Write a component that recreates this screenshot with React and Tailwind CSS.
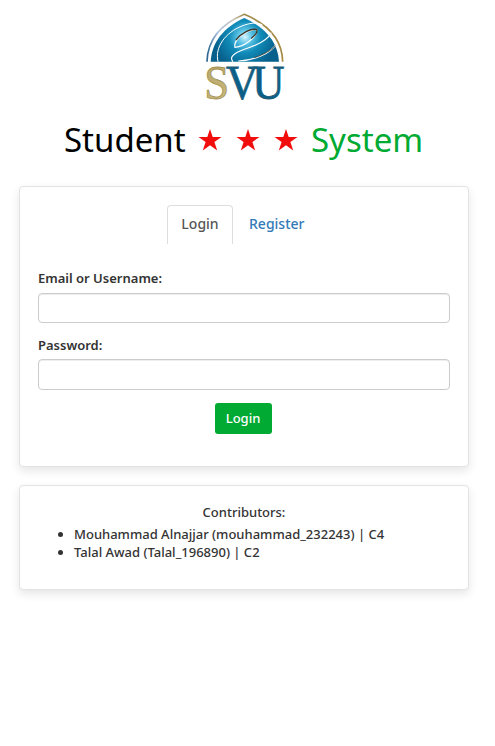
import React from "react";

function Logo() {
  return (
    <svg viewBox="0 0 300 300" className="block h-[100px] w-[100px] overflow-visible" aria-label="SVU">
      <defs>
        <radialGradient id="dome" gradientUnits="userSpaceOnUse" cx="150" cy="96" r="95">
          <stop offset="0" stopColor="#d8f5fc" />
          <stop offset="0.22" stopColor="#5cc4e6" />
          <stop offset="0.5" stopColor="#118bb8" />
          <stop offset="1" stopColor="#075f8c" />
        </radialGradient>
        <linearGradient id="rim" x1="0" x2="1" y1="0" y2="0">
          <stop offset="0" stopColor="#27628f" />
          <stop offset="0.15" stopColor="#a9bfe0" />
          <stop offset="0.35" stopColor="#c9c8bf" />
          <stop offset="0.5" stopColor="#a08a4c" />
          <stop offset="1" stopColor="#a58a43" />
        </linearGradient>
        <linearGradient id="gold" x1="0" x2="1" y1="0" y2="1">
          <stop offset="0" stopColor="#b5a366" />
          <stop offset="0.5" stopColor="#c6b679" />
          <stop offset="1" stopColor="#a59152" />
        </linearGradient>
      </defs>
      <path d="M36 170C38 105 78 57 148 28C218 57 262 105 263 170" fill="none" stroke="url(#rim)" strokeWidth="5" />
      <path d="M47 170C50 113 84 68 148 39C212 68 249 113 252 170Z" fill="url(#dome)" />
      <g fill="none" strokeLinecap="round">
        <path d="M69 169C58 127 92 82 141 63C165 53 190 51 202 60" stroke="#fff" strokeWidth="3" />
        <path d="M120 127C114 106 151 75 185 73C190 93 150 124 120 127Z" stroke="#fff" strokeWidth="3.5" />
        <path d="M124 104C140 83 166 71 185 73C188 80 182 90 170 99" stroke="#3d3829" strokeWidth="4" />
        <path d="M113 169C99 150 133 138 159 129C192 118 220 101 228 84" stroke="#fff" strokeWidth="3.5" />
        <path d="M131 168C181 166 225 145 243 119" stroke="#fff" strokeWidth="3.5" />
        <path d="M178 158C204 150 228 137 240 123" stroke="#4c4632" strokeWidth="2.5" />
      </g>
      <text transform="translate(0 283) scale(.92 1)" fontFamily="'Liberation Serif', serif" fontSize="146" strokeWidth="2.5">
        <tspan x="30" fill="url(#gold)" stroke="#a39153">S</tspan>
        <tspan x="101" fill="#08608a" stroke="#245d76">V</tspan>
        <tspan x="187" fill="#08608a" stroke="#245d76">U</tspan>
      </text>
    </svg>
  );
}

function Star() {
  return (
    <svg viewBox="0 0 24 24" className="h-6 w-6" aria-hidden="true">
      <path fill="#f20d0d" d="M12 1L14.7 9H23.5L16.4 14L19.2 22.5L12 17.3L4.8 22.5L7.6 14L.5 9H9.3Z" />
    </svg>
  );
}

function Field({ label, type, className, inputClassName }) {
  return (
    <label className={className}>
      <span className="block text-[13px] leading-[18px] font-semibold">{label}</span>
      <input
        type={type}
        className={`block w-full rounded-[4px] border border-[#ccc] bg-white px-3 shadow-[inset_0_1px_1px_rgba(0,0,0,0.075)] outline-none ${inputClassName}`}
      />
    </label>
  );
}

const card = "rounded-[4px] border border-[#e3e3e3] bg-white shadow-[0_4px_10px_rgba(0,0,0,0.1)]";

export default function App() {
  return (
    <main className="flex min-h-[746px] w-[495px] flex-col bg-white pt-[5px] pr-[26px] pl-[19px] font-['Noto_Sans',sans-serif] text-[#333]">
      <div className="pl-[176px]">
        <Logo />
      </div>
      <h1 className="mt-3 flex h-[46px] items-center pl-[45px] text-[33px] leading-[46px] text-black">
        <span className="w-[134px]">Student</span>
        <span className="flex w-[113px] gap-[14px]">
          <Star />
          <Star />
          <Star />
        </span>
        <span className="text-[#00aa33]">System</span>
      </h1>

      <section className={`${card} mt-[23px] flex h-[281px] flex-col px-[18px] pt-[18px]`}>
        <nav className="flex pl-[129px] text-[14px] leading-5 font-medium">
          <a className="h-[39px] w-[66px] rounded-t-[4px] border border-b-0 border-[#ddd] pt-2 text-center text-[#555]">Login</a>
          <a className="ml-4 pt-[9px] text-[#337ab7]">Register</a>
        </nav>
        <Field label="Email or Username:" type="text" className="mt-[25px]" inputClassName="mt-[6px] h-[30px]" />
        <Field label="Password:" type="password" className="mt-[13px]" inputClassName="mt-[5px] h-[31px]" />
        <button className="mt-[13px] mr-0.5 h-[31px] w-[57px] self-center rounded-[3px] bg-[#00aa33] text-[13px] font-medium text-white">Login</button>
      </section>

      <section className={`${card} mt-[18px] h-[105px] px-[18px] pt-[17px] text-[13px] leading-[18px] font-medium`}>
        <p className="text-center">Contributors:</p>
        <ul className="mt-1 list-disc pl-9">
          <li>Mouhammad Alnajjar (mouhammad_232243) | C4</li>
          <li>Talal Awad (Talal_196890) | C2</li>
        </ul>
      </section>
    </main>
  );
}
